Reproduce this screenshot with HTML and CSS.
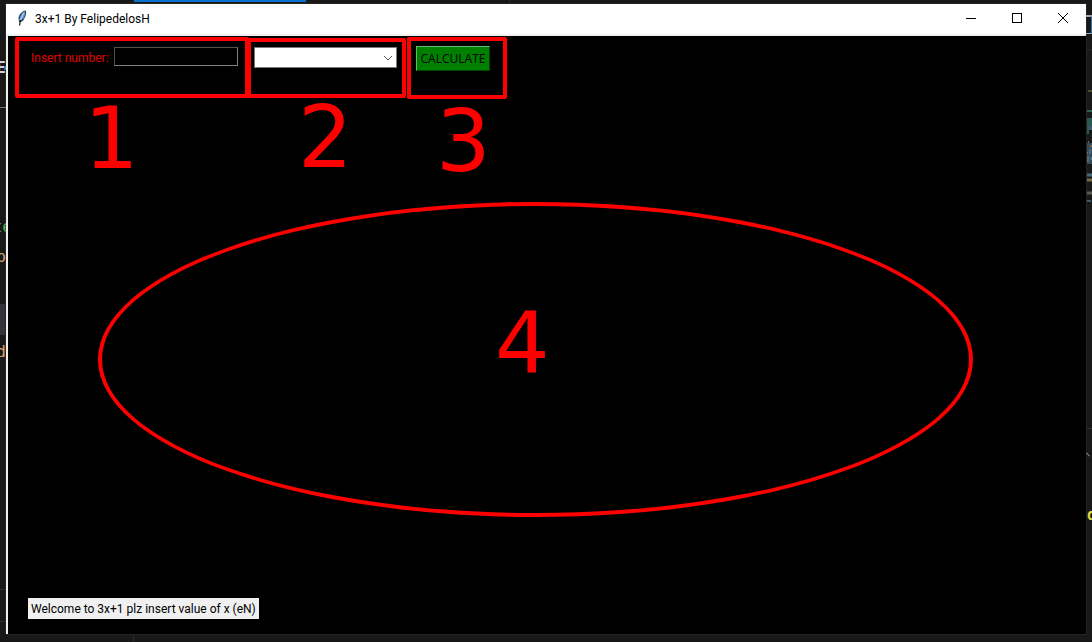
FILE: index.html
```html
<!DOCTYPE html>
<html lang="en">
<head>
<meta charset="utf-8">
<title>3x+1 By FelipedelosH</title>
<link rel="stylesheet" href="styles.css">
</head>
<body>
<div class="desktop">
  <div class="edge edge-top"><span class="tab"></span><span class="tab-divider"></span></div>
  <div class="edge edge-left" aria-hidden="true">
    <span class="code code-keyword">E</span>
    <span class="code-dot"></span>
    <span class="rule rule-a"></span>
    <span class="code code-type">te</span>
    <span class="code code-name">p</span>
    <span class="row-active"></span>
    <span class="code code-def">d</span>
    <span class="rule rule-b"></span>
    <span class="rule rule-c"></span>
  </div>

  <main class="window">
    <header class="titlebar">
      <svg class="feather" viewBox="0 0 10 16" aria-hidden="true">
        <path d="M8 0.500C5 1.500 2 4.500 1.500 8L2 12L5 11.500C8 9 9.500 4 9 1Z" fill="#26394c"/>
        <path d="M7.800 1.200C4.500 3 2.500 6 2.200 10L4.500 10.300C7.500 8 8.600 4.500 8 1.200Z" fill="#5c94d2"/>
        <path d="M7 2.500L3 11" stroke="#c4def5" stroke-width="1" fill="none"/>
        <path d="M3.500 10L2.500 15.500" stroke="#111" stroke-width="1.200" fill="none"/>
      </svg>
      <h1 class="title">3x+1 By FelipedelosH</h1>
      <div class="controls">
        <button class="control" aria-label="Minimize"><svg viewBox="0 0 10 10"><path d="M0 5.500H10"/></svg></button>
        <button class="control" aria-label="Maximize"><svg viewBox="0 0 10 10"><path d="M.5.5H9.500V9.500H.5Z"/></svg></button>
        <button class="control control-close" aria-label="Close"><svg viewBox="0 0 10 10"><path d="M0 0L10 10M10 0L0 10"/></svg></button>
      </div>
    </header>

    <section class="canvas">
      <form class="toolbar">
        <label class="label" for="number">Insert number:</label>
        <input class="number" id="number" type="text">
        <span class="combo">
          <select class="select" aria-label="Operation"><option></option></select>
          <svg class="chevron" viewBox="0 0 10 6" aria-hidden="true"><path d="M1 1L5 5L9 1"/></svg>
        </span>
        <button class="calculate" type="button">CALCULATE</button>
      </form>
      <p class="status">Welcome to 3x+1 plz insert value of x (eN)</p>

      <span class="mark mark-one"></span>
      <span class="mark mark-two"></span>
      <span class="mark mark-three"></span>
      <span class="mark mark-four"></span>
      <span class="digit digit-one">1</span>
      <span class="digit digit-two">2</span>
      <span class="digit digit-three">3</span>
      <span class="digit digit-four">4</span>
    </section>
  </main>

  <div class="edge edge-right" aria-hidden="true">
    <span class="field"></span>
    <svg class="minimap" viewBox="0 0 5 210">
      <path d="M0 50H5M0 143.500H5" stroke="#2b2b2b"/>
      <path d="M1 91H5" stroke="#46512f" stroke-width="2"/>
      <path d="M0 111H5" stroke="#28644f" stroke-width="2"/>
      <path d="M0 118H5V126H2V134H0Z" fill="#28584f"/>
      <path d="M2 126H5V130H2Z" fill="#40586a"/>
      <path d="M0 143H5V164H0Z" fill="#354b59"/>
      <path d="M1 142H2M3 146H5M0 153H1" stroke="#81604e" stroke-width="2"/>
      <path d="M3 149V154M1 156V162M4 157V160" stroke="#65899e"/>
      <path d="M0 175H5" stroke="#45687b" stroke-width="3"/>
      <path d="M0 180H5" stroke="#766b4b" stroke-width="3"/>
      <path d="M0 193H5" stroke="#575e51" stroke-width="3"/>
      <path d="M0 201H4" stroke="#385d71" stroke-width="2"/>
    </svg>
    <span class="rule rule-d"></span>
    <svg class="pointer" viewBox="0 0 4 5"><path d="M0 .5L4 4.500"/></svg>
    <span class="code code-letter">d</span>
  </div>
  <div class="edge edge-bottom"><span class="panel-divider"></span></div>
</div>
</body>
</html>
```

FILE: styles.css
```css
* { box-sizing: border-box; }

body {
  margin: 0;
  background: #181818;
  font-family: Roboto, "Open Sans", sans-serif;
  font-size: 12px;
  line-height: 16px;
}

.desktop {
  display: grid;
  grid-template: 4px 1fr 8px / 6px 1fr 6px;
  min-height: 100vh;
}

.edge { position: relative; overflow: hidden; }
.edge-top { grid-column: 1 / -1; }
.edge-bottom { grid-column: 1 / -1; }

.tab {
  position: absolute;
  left: 134px;
  top: 0;
  width: 172px;
  height: 2px;
  background: #0873ce;
}

.tab-divider {
  position: absolute;
  left: 509px;
  top: 0;
  width: 1px;
  height: 3px;
  background: #2b2b2b;
}

.panel-divider {
  position: absolute;
  left: 133px;
  top: 0;
  width: 1px;
  height: 8px;
  background: #2b2b2b;
}

.code {
  position: absolute;
  right: 0;
  font-family: "DejaVu Sans Mono", monospace;
  font-size: 16px;
  line-height: 20px;
}

.code-keyword { top: 54px; color: #d4d4d4; font-weight: bold; }
.code-dot { position: absolute; left: 4px; top: 62px; width: 2px; height: 4px; background: #2878b8; }
.code-type { top: 213px; right: -6px; color: #4fae58; }
.code-name { top: 243px; color: #d7a36b; }
.code-def { top: 338px; color: #d7a36b; }
.code-letter { top: 501px; left: 1px; color: #d9d943; font-weight: bold; }

.row-active {
  position: absolute;
  left: 0;
  top: 300px;
  width: 5px;
  height: 31px;
  background: #323238;
}

.rule { position: absolute; left: 0; width: 100%; height: 1px; background: #2e2e2e; }
.rule-a { top: 103px; background: #777; }
.rule-b { top: 585px; }
.rule-c { top: 617px; }
.rule-d { top: 424px; }

.field {
  position: absolute;
  left: 0;
  top: 11px;
  width: 6px;
  height: 19px;
  border: solid #aaa;
  border-width: 2px 0 1px;
  border-right: 1px solid #2977b5;
}

.minimap { position: absolute; left: 1px; top: -4px; width: 5px; height: 210px; }
.pointer { position: absolute; left: 0; top: 448px; width: 4px; height: 5px; stroke: #aaa; }

.window {
  display: flex;
  flex-direction: column;
  min-width: 0;
  background: #000;
  border-left: 2px solid #f0f0f0;
  outline: 1px solid #242424;
}

.titlebar {
  display: flex;
  align-items: center;
  height: 32px;
  margin-left: -2px;
  padding-left: 11px;
  padding-bottom: 2px;
  border-bottom: 2px solid #f0f0f0;
  background: #fff;
}

.feather { width: 10px; height: 16px; }
.title { margin: 0 auto 0 8px; padding-top: 1px; font-size: 12px; font-weight: 400; }
.controls { display: flex; gap: 36px; padding-right: 18px; }

.control {
  display: flex;
  width: 10px;
  height: 10px;
  padding: 0;
  border: 0;
  background: none;
}

.control svg { width: 10px; height: 10px; overflow: visible; fill: none; stroke: #000; shape-rendering: crispEdges; }
.control-close svg { shape-rendering: auto; }

.canvas {
  position: relative;
  display: flex;
  flex: 1;
  flex-direction: column;
  justify-content: space-between;
  align-items: flex-start;
  padding: 10px 20px 15px;
}

.toolbar { display: flex; align-items: flex-start; }
.label { width: 86px; padding: 4px 0 0 3px; color: #e00000; white-space: nowrap; }

.number {
  width: 124px;
  height: 19px;
  margin-top: 1px;
  padding: 1px 3px;
  border: 1px solid #808080;
  border-top-color: #505050;
  border-left-color: #505050;
  background: #000;
  color: #fff;
}

.combo { display: grid; align-items: center; margin: 1px 19px 0 16px; }

.select {
  grid-area: 1 / 1;
  width: 143px;
  height: 21px;
  appearance: none;
  border: 1px solid #7a7a7a;
  border-radius: 0;
  background: #fff;
}

.chevron {
  grid-area: 1 / 1;
  justify-self: end;
  width: 10px;
  height: 6px;
  margin-right: 4px;
  fill: none;
  stroke: #555;
  pointer-events: none;
}

.calculate {
  width: 74px;
  height: 25px;
  padding: 0;
  border: 1px solid #6db66d;
  border-right-color: #004800;
  border-bottom-color: #004800;
  background: #008000;
  color: #000;
  font: 12px "Open Sans", sans-serif;
  white-space: nowrap;
}

.status {
  min-width: 229px;
  margin: 0;
  padding: 3px 3px 2px;
  background: #f0f0f0;
  color: #000;
}

.mark { position: absolute; border: 4px solid #f00; border-radius: 2px; pointer-events: none; }
.mark-one { left: 7px; top: 1px; width: 234px; height: 61px; }
.mark-two { left: 239px; top: 2px; width: 159px; height: 60px; }
.mark-three { left: 399px; top: 1px; width: 100px; height: 62px; }
.mark-four { left: 90px; top: 166px; width: 875px; height: 315px; border-radius: 50%; }

.digit {
  position: absolute;
  color: #f00;
  font-family: "DejaVu Sans", sans-serif;
  font-size: 86px;
  line-height: 100px;
  pointer-events: none;
}

.digit-one { left: 76px; top: 52px; }
.digit-two { left: 290px; top: 51px; }
.digit-three { left: 428px; top: 55px; }
.digit-four { left: 487px; top: 257px; }
```
